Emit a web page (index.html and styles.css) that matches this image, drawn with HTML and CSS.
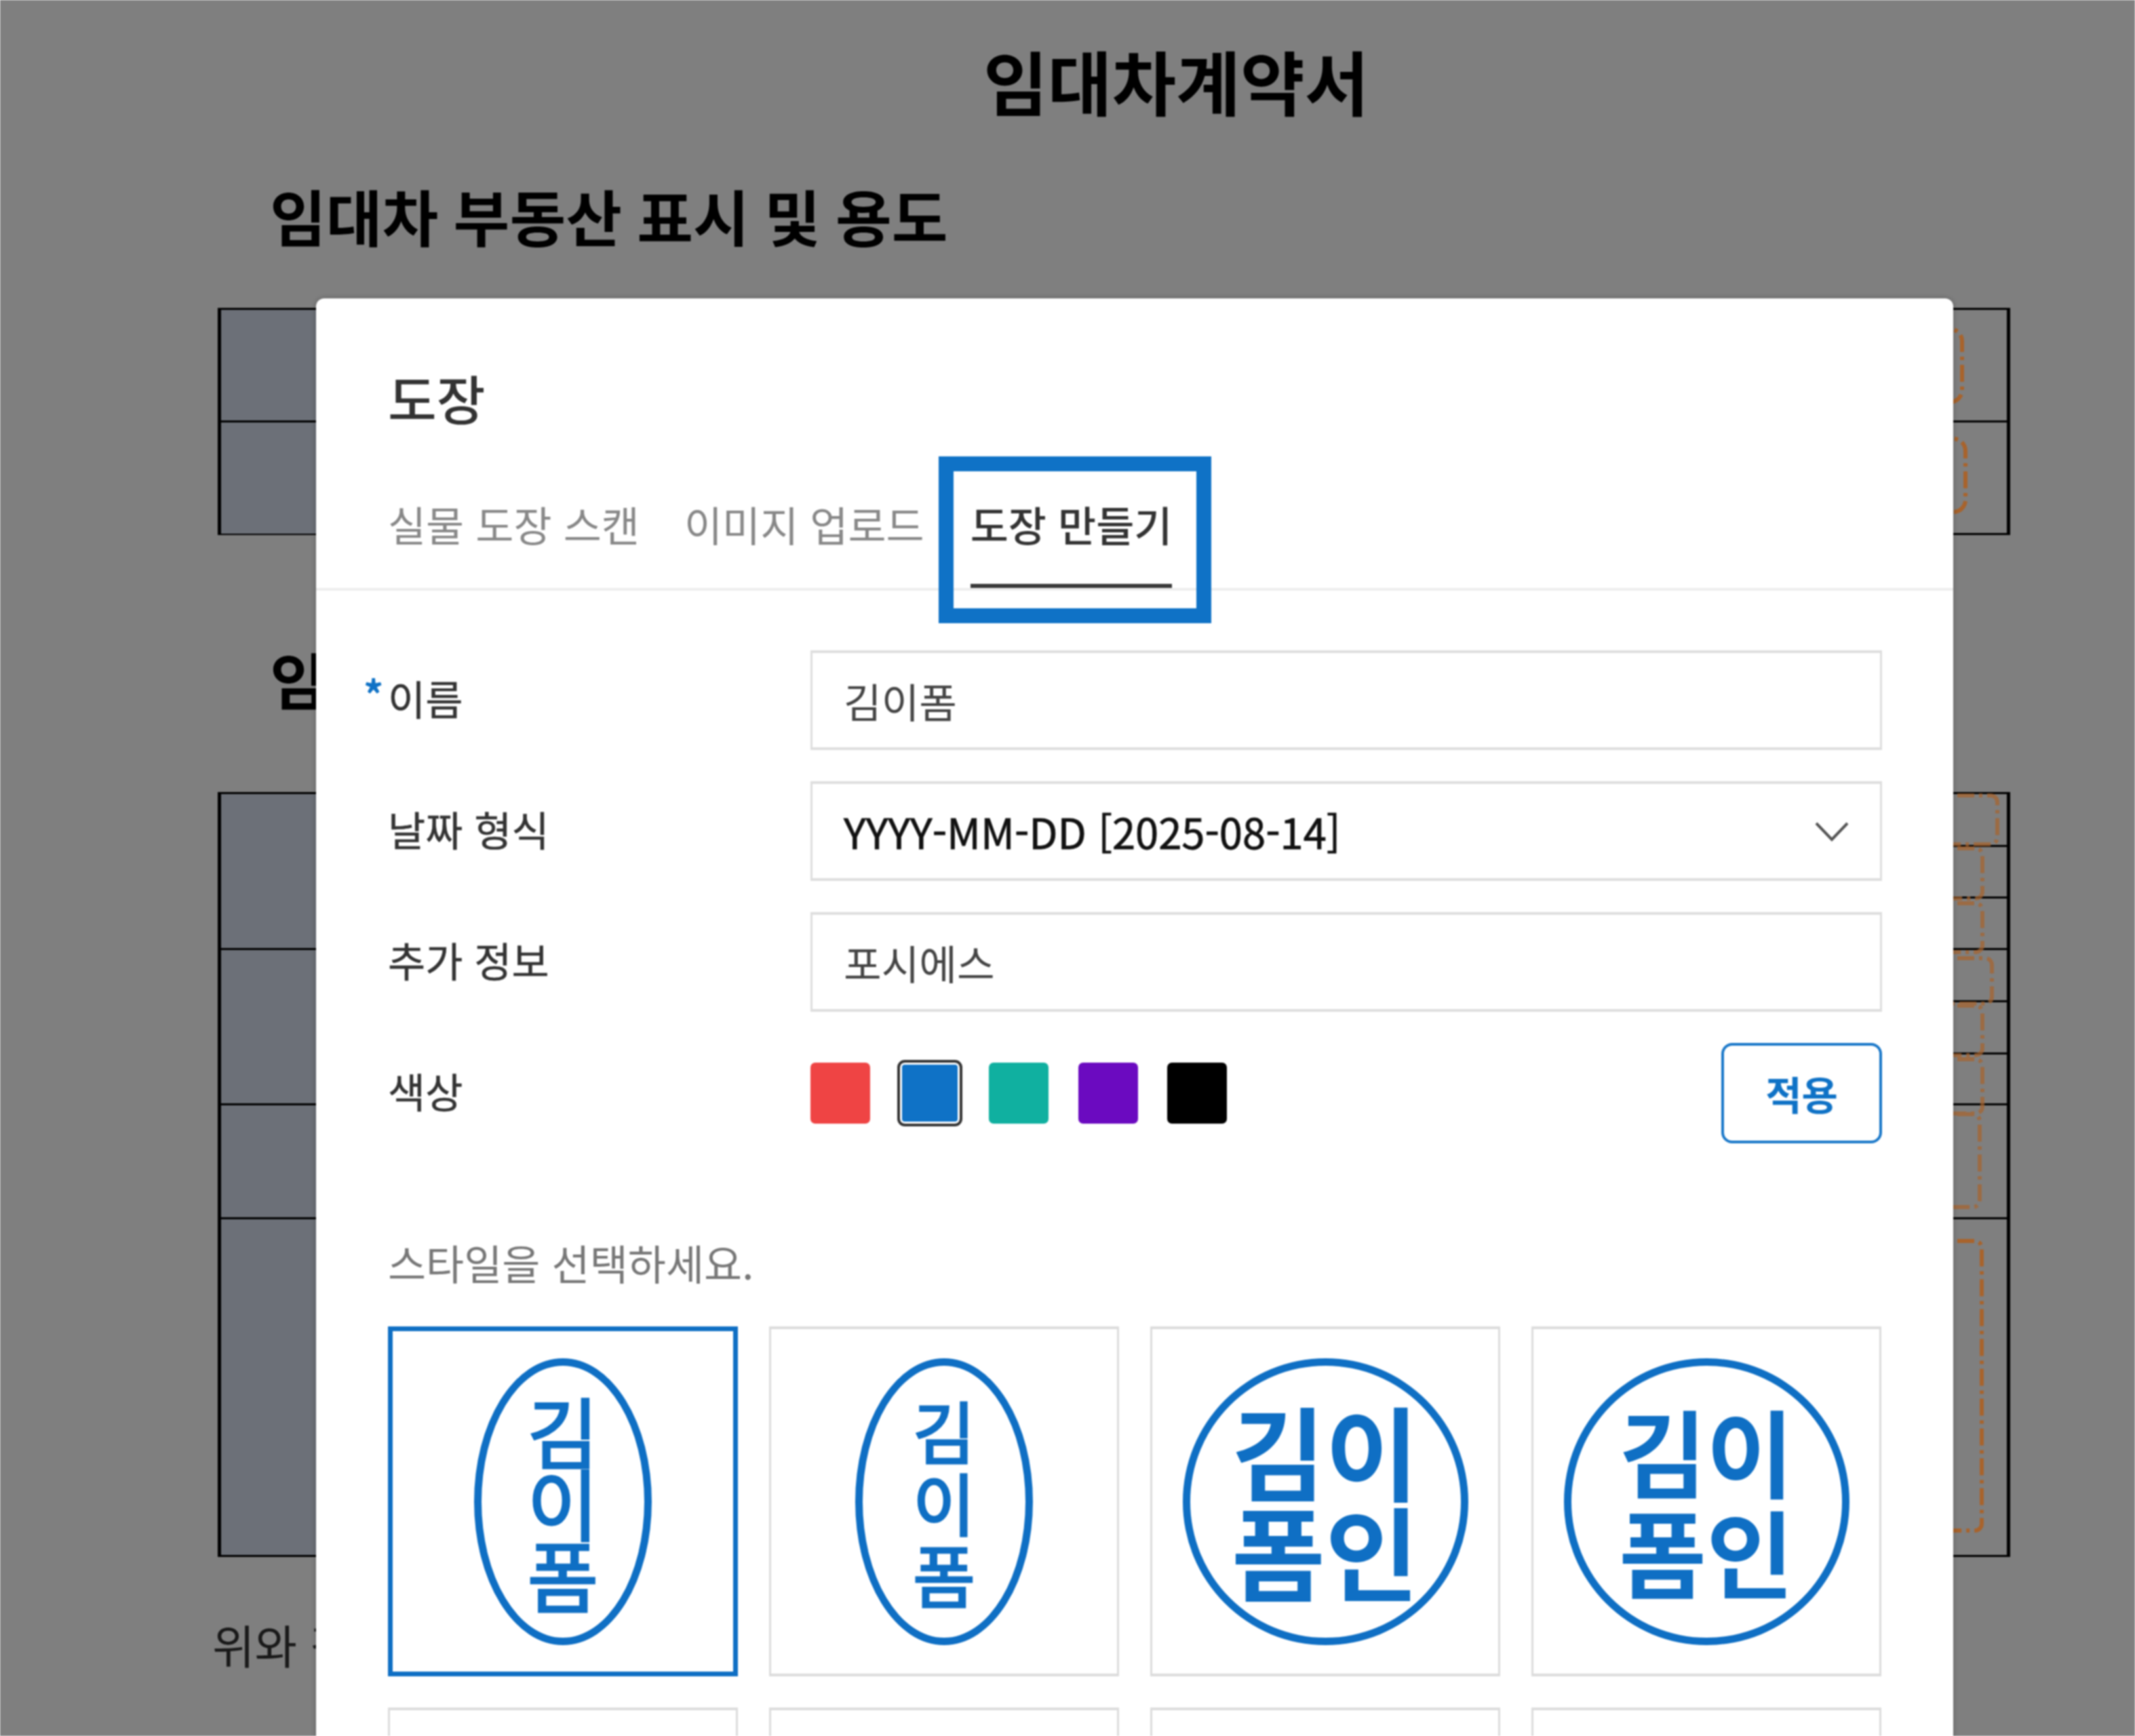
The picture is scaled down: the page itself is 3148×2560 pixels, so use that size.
FILE: index.html
```html
<!DOCTYPE html>
<html lang="ko">
<head>
<meta charset="utf-8">
<title>임대차계약서</title>
<link rel="stylesheet" href="styles.css">
</head>
<body>
<div class="screen">
  <main class="doc">
    <h1 class="doc-title">임대차계약서</h1>
    <h2 class="doc-heading">임대차 부동산 표시 및 용도</h2>
    <div class="sheet sheet-a">
      <div class="sheet-label"></div><div class="sheet-value"></div>
      <div class="sheet-label"></div><div class="sheet-value"></div>
    </div>
    <h2 class="doc-heading doc-heading-second">임대차 계약 내용</h2>
    <div class="sheet sheet-b">
      <div class="sheet-label span-3"></div><div class="sheet-value"></div><div class="sheet-value"></div><div class="sheet-value"></div>
      <div class="sheet-label span-3"></div><div class="sheet-value"></div><div class="sheet-value"></div><div class="sheet-value"></div>
      <div class="sheet-label"></div><div class="sheet-value"></div>
      <div class="sheet-label"></div><div class="sheet-value"></div>
    </div>
    <p class="doc-foot">위와 같이</p>
  </main>

  <div class="dim">
    <svg class="sign-boxes" width="3148" height="2560" viewBox="0 0 3148 2560" fill="none">
      <g class="sign-box">
        <rect x="2700" y="485" width="193" height="108" rx="18"/>
        <rect x="2700" y="647" width="198" height="108" rx="18"/>
        <rect x="2700" y="1830" width="222" height="427" rx="10"/>
      </g>
      <g class="sign-box sign-box-soft">
        <rect x="2700" y="1173" width="245" height="72" rx="10"/>
        <rect x="2700" y="1251" width="223" height="74" rx="10"/>
        <rect x="2700" y="1332" width="223" height="72" rx="10"/>
        <rect x="2700" y="1413" width="237" height="67" rx="10"/>
        <rect x="2700" y="1483" width="223" height="73" rx="10"/>
        <rect x="2700" y="1562" width="223" height="80" rx="10"/>
        <rect x="2700" y="1643" width="219" height="137" rx="10"/>
      </g>
    </svg>

    <section class="modal">
      <h3 class="modal-title">도장</h3>
      <nav class="tabs">
        <span class="tab">실물 도장 스캔</span>
        <span class="tab">이미지 업로드</span>
        <span class="tab tab-active">도장 만들기<span class="callout"></span></span>
      </nav>

      <div class="form">
        <div class="field-label"><span class="required">*</span>이름</div>
        <div class="control control-muted">김이폼</div>

        <div class="field-label">날짜 형식</div>
        <div class="control control-select">
          <span>YYYY-MM-DD [2025-08-14]</span>
          <svg class="chevron" width="50" height="30" viewBox="0 0 50 30" fill="none"><path d="M2 3 L25 27 L48 3"/></svg>
        </div>

        <div class="field-label">추가 정보</div>
        <div class="control control-muted">포시에스</div>

        <div class="field-label">색상</div>
        <div class="colors">
          <div class="swatches">
            <span class="swatch swatch-red"></span>
            <span class="swatch swatch-blue swatch-on"></span>
            <span class="swatch swatch-teal"></span>
            <span class="swatch swatch-purple"></span>
            <span class="swatch swatch-black"></span>
          </div>
          <button class="apply" type="button">적용</button>
        </div>
      </div>

      <p class="style-hint">스타일을 선택하세요.</p>

      <div class="styles">
        <div class="style-cell style-cell-on">
          <div class="stamp stamp-oval"><span>김</span><span>이</span><span>폼</span></div>
        </div>
        <div class="style-cell">
          <div class="stamp stamp-oval stamp-brush"><span>김</span><span>이</span><span>폼</span></div>
        </div>
        <div class="style-cell">
          <div class="stamp stamp-round"><span>김이</span><span>폼인</span></div>
        </div>
        <div class="style-cell">
          <div class="stamp stamp-round stamp-brush"><span>김이</span><span>폼인</span></div>
        </div>
        <div class="style-cell"></div>
        <div class="style-cell"></div>
        <div class="style-cell"></div>
        <div class="style-cell"></div>
      </div>
    </section>
  </div>
</div>
</body>
</html>
```

FILE: styles.css
```css
* { box-sizing: border-box; }
html, body { margin: 0; padding: 0; background: #fff; }
body {
  width: 3148px;
  height: 2560px;
  overflow: hidden;
  font-family: "Noto Sans CJK KR", "Noto Sans", sans-serif;
  color: #333;
}
.screen {
  position: relative;
  width: 3148px;
  height: 2560px;
  overflow: hidden;
  filter: blur(0.9px);
}

/* Document under the dialog */
.doc { padding: 49px 184px 0 321px; }
.doc-title {
  margin: 0;
  padding-left: 1129px;
  font-size: 103px;
  line-height: 140px;
  font-weight: 700;
  color: #000;
  white-space: nowrap;
}
.doc-heading {
  margin: 68px 0 0;
  padding-left: 77px;
  font-size: 90px;
  line-height: 120px;
  font-weight: 700;
  word-spacing: -3px;
  color: #000;
  white-space: nowrap;
}
.doc-heading-second { margin-top: 151px; }
.sheet {
  display: grid;
  grid-template-columns: 480px 1fr;
  margin-top: 77px;
  border-top: 3px solid #000;
  border-bottom: 3px solid #000;
  border-left: 5px solid #000;
  border-right: 5px solid #000;
}
.sheet-a { grid-template-rows: 166px 164px; height: 335px; }
.sheet-b {
  margin-top: 108px;
  height: 1128px;
  grid-template-rows: 78px 76px 76px 77px 77px 75px 168px 1fr;
}
.sheet-label { background: #d8e0f0; border-bottom: 3px solid #000; }
.sheet-value { border-bottom: 3px solid #000; }
.sheet > :nth-last-child(-n+2) { border-bottom: 0; }
.span-3 { grid-row: span 3; }
.doc-foot {
  margin: 84px 0 0 -8px;
  font-size: 68px;
  line-height: 90px;
  color: #333;
}

/* Dim layer */
.dim {
  position: absolute;
  inset: 0;
  background: rgba(0, 0, 0, 0.5);
  overflow: hidden;
}
.sign-boxes { position: absolute; left: 0; top: 0; }
.sign-box {
  stroke: #a8632c;
  stroke-width: 6;
  stroke-dasharray: 25 7 5 7;
}
.sign-box-soft { opacity: 0.7; }

/* Dialog */
.modal {
  position: relative;
  width: 2414px;
  margin: 440px 0 0 466px;
  padding-top: 96px;
  background: #fff;
  border-radius: 12px;
  box-shadow: 0 0 8px rgba(0, 0, 0, 0.25);
}
.modal-title {
  margin: 0;
  padding-left: 106px;
  font-size: 78px;
  line-height: 100px;
  font-weight: 500;
  color: #333;
}
.tabs {
  display: flex;
  gap: 66px;
  padding: 0 0 0 106px;
  margin-top: 92px;
  border-bottom: 4px solid #eeeeee;
}
.tab {
  position: relative;
  display: block;
  height: 139px;
  font-size: 61px;
  line-height: 90px;
  color: #888;
  white-space: nowrap;
}
.tab-active {
  margin-left: 2px;
  color: #333;
  font-weight: 500;
  border-bottom: 6px solid #3a3a3a;
}
.callout {
  position: absolute;
  left: -47px;
  top: -55px;
  width: 402px;
  height: 246px;
  border: 22px solid #0f72c6;
}

.form {
  display: grid;
  grid-template-columns: 623px 1fr;
  grid-auto-rows: 147px;
  row-gap: 46px;
  margin: 88px 105px 0 106px;
}
.field-label {
  position: relative;
  display: flex;
  align-items: center;
  padding-bottom: 8px;
  font-size: 60px;
  color: #333;
  -webkit-text-stroke: 0.5px #333;
}
.required {
  position: absolute;
  left: -36px;
  top: 28px;
  font-size: 58px;
  line-height: 70px;
  color: #0f72c6;
  font-weight: 700;
  -webkit-text-stroke: 0;
}
.control {
  display: flex;
  align-items: center;
  padding: 0 46px 0 46px;
  border: 4px solid #dedede;
  border-left-width: 3px;
  border-right-width: 3px;
  font-size: 60.5px;
  color: #111;
}
.control-muted { color: #444; }
.control-select {
  justify-content: space-between;
  font-size: 61.5px;
  -webkit-text-stroke: 0.8px #111;
}
.chevron path { stroke: #555; stroke-width: 4; }
.colors { display: flex; align-items: center; justify-content: space-between; }
.swatches { display: flex; gap: 43.5px; }
.swatch { display: block; width: 88px; height: 90px; border-radius: 7px; }
.swatch-red { background: #ef4444; }
.swatch-blue { background: #0f72c6; }
.swatch-teal { background: #10b0a0; }
.swatch-purple { background: #6b0ac0; }
.swatch-black { background: #000; }
.swatch-on {
  outline: 4px solid #333;
  box-shadow: inset 0 0 0 3px #fff;
}
.apply {
  width: 237px;
  height: 148px;
  padding: 0;
  background: #fff;
  border: 4px solid #1a78c9;
  border-radius: 16px;
  font-family: inherit;
  font-size: 58px;
  font-weight: 700;
  color: #0f72c6;
}

.style-hint {
  margin: 132px 0 0;
  padding-left: 106px;
  font-size: 61px;
  line-height: 90px;
  color: #777;
}
.styles {
  display: grid;
  grid-template-columns: repeat(4, 516px);
  grid-auto-rows: 516px;
  gap: 46px;
  margin: 49px 0 0 106px;
}
.style-cell {
  display: flex;
  align-items: center;
  justify-content: center;
  border: 4px solid #dcdcdc;
  border-left-width: 3px;
  border-right-width: 3px;
}
.style-cell-on { border: 7px solid #0f6fc4; }

.stamp {
  display: flex;
  flex-direction: column;
  align-items: center;
  justify-content: center;
  height: 423px;
  border: 11px solid #0f6fc4;
  border-radius: 50%;
  color: #0f6fc4;
  text-align: center;
}
.stamp span { display: block; white-space: nowrap; }
.stamp-oval {
  width: 262px;
  font-size: 114px;
  line-height: 106px;
  font-weight: 400;
  -webkit-text-stroke: 3px #0f6fc4;
}
.stamp-round {
  width: 421px;
  padding-bottom: 6px;
  font-size: 150px;
  line-height: 148px;
  font-weight: 700;
}
.stamp-oval.stamp-brush { font-size: 100px; }
.stamp-round.stamp-brush { font-size: 140px; }
```
